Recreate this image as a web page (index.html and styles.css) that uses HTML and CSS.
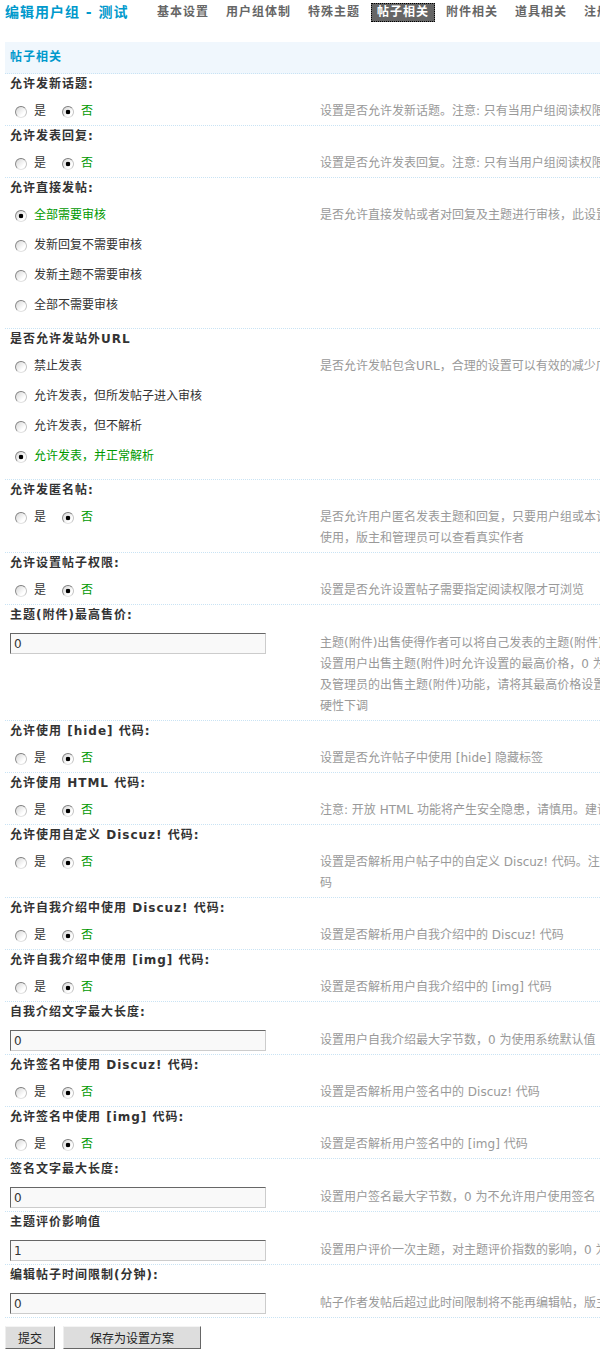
FILE: index.html
```html
<!DOCTYPE html>
<html lang="zh-CN">
<head>
  <meta charset="UTF-8">
  <title>编辑用户组 - 测试</title>
  <link rel="stylesheet" href="styles.css">
</head>
<body>
<div class="page">

  <!-- title + tab strip -->
  <div class="top">
    <h1>编辑用户组 - 测试</h1>
    <ul class="tabs">
      <li>基本设置</li>
      <li>用户组体制</li>
      <li>特殊主题</li>
      <li class="on">帖子相关</li>
      <li>附件相关</li>
      <li>道具相关</li>
      <li>注册相关</li>
    </ul>
  </div>

  <form class="panel" onsubmit="return false">
    <h3 class="sec-head">帖子相关</h3>

    <div class="item">
      <div class="item-title">允许发新话题:</div>
      <div class="item-row">
        <div class="field">
          <label class="opt"><input type="radio" name="allowpost" value="1"><span>是</span></label>
          <label class="opt"><input type="radio" name="allowpost" value="0" checked><span>否</span></label>
        </div>
        <div class="tip">设置是否允许发新话题。注意: 只有当用户组阅读权限高于 0 时，才能发新话题</div>
      </div>
    </div>

    <div class="item">
      <div class="item-title">允许发表回复:</div>
      <div class="item-row">
        <div class="field">
          <label class="opt"><input type="radio" name="allowreply" value="1"><span>是</span></label>
          <label class="opt"><input type="radio" name="allowreply" value="0" checked><span>否</span></label>
        </div>
        <div class="tip">设置是否允许发表回复。注意: 只有当用户组阅读权限高于 0 时，才能发表回复</div>
      </div>
    </div>

    <div class="item">
      <div class="item-title">允许直接发帖:</div>
      <div class="item-row">
        <div class="field list">
          <label class="opt"><input type="radio" name="allowdirectpost" value="0" checked><span>全部需要审核</span></label>
          <label class="opt"><input type="radio" name="allowdirectpost" value="1"><span>发新回复不需要审核</span></label>
          <label class="opt"><input type="radio" name="allowdirectpost" value="2"><span>发新主题不需要审核</span></label>
          <label class="opt"><input type="radio" name="allowdirectpost" value="3"><span>全部不需要审核</span></label>
        </div>
        <div class="tip">是否允许直接发帖或者对回复及主题进行审核，此设置仅对普通用户组有效</div>
      </div>
    </div>

    <div class="item">
      <div class="item-title">是否允许发站外URL</div>
      <div class="item-row">
        <div class="field list">
          <label class="opt"><input type="radio" name="allowposturl" value="0"><span>禁止发表</span></label>
          <label class="opt"><input type="radio" name="allowposturl" value="1"><span>允许发表，但所发帖子进入审核</span></label>
          <label class="opt"><input type="radio" name="allowposturl" value="2"><span>允许发表，但不解析</span></label>
          <label class="opt"><input type="radio" name="allowposturl" value="3" checked><span>允许发表，并正常解析</span></label>
        </div>
        <div class="tip">是否允许发帖包含URL，合理的设置可以有效的减少广告帖的数量</div>
      </div>
    </div>

    <div class="item">
      <div class="item-title">允许发匿名帖:</div>
      <div class="item-row">
        <div class="field">
          <label class="opt"><input type="radio" name="allowanonymous" value="1"><span>是</span></label>
          <label class="opt"><input type="radio" name="allowanonymous" value="0" checked><span>否</span></label>
        </div>
        <div class="tip">是否允许用户匿名发表主题和回复，只要用户组或本论坛允许，用户便可使用匿名发帖功能，匿名帖需登录后才可<br>使用，版主和管理员可以查看真实作者</div>
      </div>
    </div>

    <div class="item">
      <div class="item-title">允许设置帖子权限:</div>
      <div class="item-row">
        <div class="field">
          <label class="opt"><input type="radio" name="allowsetreadperm" value="1"><span>是</span></label>
          <label class="opt"><input type="radio" name="allowsetreadperm" value="0" checked><span>否</span></label>
        </div>
        <div class="tip">设置是否允许设置帖子需要指定阅读权限才可浏览</div>
      </div>
    </div>

    <div class="item">
      <div class="item-title">主题(附件)最高售价:</div>
      <div class="item-row txt">
        <div class="field"><input class="txt-input" type="text" name="maxprice" value="0"></div>
        <div class="tip">主题(附件)出售使得作者可以将自己发表的主题(附件)设置为需要付费才能浏览，此处<br>设置用户出售主题(附件)时允许设置的最高价格，0 为不允许用户出售。如需关闭版主<br>及管理员的出售主题(附件)功能，请将其最高价格设置为 0，已出售的主题价格不会被<br>硬性下调</div>
      </div>
    </div>

    <div class="item">
      <div class="item-title">允许使用 [hide] 代码:</div>
      <div class="item-row">
        <div class="field">
          <label class="opt"><input type="radio" name="allowhidecode" value="1"><span>是</span></label>
          <label class="opt"><input type="radio" name="allowhidecode" value="0" checked><span>否</span></label>
        </div>
        <div class="tip">设置是否允许帖子中使用 [hide] 隐藏标签</div>
      </div>
    </div>

    <div class="item">
      <div class="item-title">允许使用 HTML 代码:</div>
      <div class="item-row">
        <div class="field">
          <label class="opt"><input type="radio" name="allowhtml" value="1"><span>是</span></label>
          <label class="opt"><input type="radio" name="allowhtml" value="0" checked><span>否</span></label>
        </div>
        <div class="tip">注意: 开放 HTML 功能将产生安全隐患，请慎用。建议只在十分必要的情况下使用</div>
      </div>
    </div>

    <div class="item">
      <div class="item-title">允许使用自定义 Discuz! 代码:</div>
      <div class="item-row">
        <div class="field">
          <label class="opt"><input type="radio" name="allowcusbbcode" value="1"><span>是</span></label>
          <label class="opt"><input type="radio" name="allowcusbbcode" value="0" checked><span>否</span></label>
        </div>
        <div class="tip">设置是否解析用户帖子中的自定义 Discuz! 代码。注意: 需先在后台添加并启用相应的代<br>码</div>
      </div>
    </div>

    <div class="item">
      <div class="item-title">允许自我介绍中使用 Discuz! 代码:</div>
      <div class="item-row">
        <div class="field">
          <label class="opt"><input type="radio" name="allowbiobbcode" value="1"><span>是</span></label>
          <label class="opt"><input type="radio" name="allowbiobbcode" value="0" checked><span>否</span></label>
        </div>
        <div class="tip">设置是否解析用户自我介绍中的 Discuz! 代码</div>
      </div>
    </div>

    <div class="item">
      <div class="item-title">允许自我介绍中使用 [img] 代码:</div>
      <div class="item-row">
        <div class="field">
          <label class="opt"><input type="radio" name="allowbioimgcode" value="1"><span>是</span></label>
          <label class="opt"><input type="radio" name="allowbioimgcode" value="0" checked><span>否</span></label>
        </div>
        <div class="tip">设置是否解析用户自我介绍中的 [img] 代码</div>
      </div>
    </div>

    <div class="item">
      <div class="item-title">自我介绍文字最大长度:</div>
      <div class="item-row txt">
        <div class="field"><input class="txt-input" type="text" name="maxbiosize" value="0"></div>
        <div class="tip">设置用户自我介绍最大字节数，0 为使用系统默认值</div>
      </div>
    </div>

    <div class="item">
      <div class="item-title">允许签名中使用 Discuz! 代码:</div>
      <div class="item-row">
        <div class="field">
          <label class="opt"><input type="radio" name="allowsigbbcode" value="1"><span>是</span></label>
          <label class="opt"><input type="radio" name="allowsigbbcode" value="0" checked><span>否</span></label>
        </div>
        <div class="tip">设置是否解析用户签名中的 Discuz! 代码</div>
      </div>
    </div>

    <div class="item">
      <div class="item-title">允许签名中使用 [img] 代码:</div>
      <div class="item-row">
        <div class="field">
          <label class="opt"><input type="radio" name="allowsigimgcode" value="1"><span>是</span></label>
          <label class="opt"><input type="radio" name="allowsigimgcode" value="0" checked><span>否</span></label>
        </div>
        <div class="tip">设置是否解析用户签名中的 [img] 代码</div>
      </div>
    </div>

    <div class="item">
      <div class="item-title">签名文字最大长度:</div>
      <div class="item-row txt">
        <div class="field"><input class="txt-input" type="text" name="maxsigsize" value="0"></div>
        <div class="tip">设置用户签名最大字节数，0 为不允许用户使用签名</div>
      </div>
    </div>

    <div class="item">
      <div class="item-title">主题评价影响值</div>
      <div class="item-row txt">
        <div class="field"><input class="txt-input" type="text" name="raterange" value="1"></div>
        <div class="tip">设置用户评价一次主题，对主题评价指数的影响，0 为不允许评价主题</div>
      </div>
    </div>

    <div class="item">
      <div class="item-title">编辑帖子时间限制(分钟):</div>
      <div class="item-row txt">
        <div class="field"><input class="txt-input" type="text" name="edittimelimit" value="0"></div>
        <div class="tip">帖子作者发帖后超过此时间限制将不能再编辑帖，版主和管理员不受此限制，0 为不限制</div>
      </div>
    </div>

    <div class="btns">
      <button type="submit" class="btn">提交</button>
      <button type="button" class="btn btn-wide">保存为设置方案</button>
    </div>
  </form>

</div>
</body>
</html>
```

FILE: styles.css
```css
body {
  margin: 0;
  font: 12px "DejaVu Sans", "Noto Sans CJK SC", sans-serif;
  color: #333;
  background: #fff;
  overflow-x: hidden;
}

.page {
  width: 1100px;
}

/* header: title and tabs */
.top {
  display: flex;
  align-items: flex-start;
  height: 42px;
  padding: 3px 0 0 5px;
  box-sizing: border-box;
}

.top h1 {
  flex: none;
  width: 146px;
  margin: 0;
  font-size: 14px;
  line-height: 19px;
  color: #09c;
  letter-spacing: 1px;
  white-space: nowrap;
}

.tabs {
  display: flex;
  list-style: none;
  margin: 0;
  padding: 0;
}

.tabs li {
  padding: 0 5px;
  margin-right: 5px;
  line-height: 17px;
  border: 1px dotted transparent;
  font-weight: bold;
  color: #666;
  letter-spacing: 1px;
  white-space: nowrap;
  cursor: pointer;
}

.tabs li.on {
  background: #666;
  color: #fff;
  border-color: #000;
}

/* settings panel */
.panel {
  margin: 0 0 0 5px;
}

.sec-head {
  margin: 0;
  height: 31px;
  line-height: 31px;
  padding-left: 5px;
  background: #f0f7fd;
  color: #09c;
  font-size: 12px;
  letter-spacing: 1px;
  border-bottom: 1px dotted #c9e3f4;
}

.item {
  border-bottom: 1px dotted #c9e3f4;
}

.item-title {
  padding: 0 5px 4px;
  line-height: 21px;
  font-weight: bold;
  letter-spacing: 1px;
  white-space: nowrap;
}

.item-row {
  display: flex;
  padding: 2px 0 3px;
  line-height: 21px;
}

.item-row.txt {
  padding: 3px 0;
}

.field {
  flex: 0 0 315px;
  box-sizing: border-box;
  padding-left: 5px;
  display: flex;
  align-items: flex-start;
}

.field.list {
  display: block;
}

.tip {
  color: #999;
  white-space: nowrap;
}

/* radio options */
.opt {
  display: inline-flex;
  align-items: center;
  height: 21px;
  margin-right: 11px;
  white-space: nowrap;
  cursor: pointer;
}

.field.list .opt {
  display: flex;
  margin: 0 0 9px;
}

.opt input {
  appearance: none;
  -webkit-appearance: none;
  flex: none;
  width: 12px;
  height: 12px;
  margin: 0 7px 0 5px;
  box-sizing: border-box;
  border-radius: 50%;
  border: 1px solid;
  border-color: #7d7d7d #c4c4c4 #e2e2e2 #8c8c8c;
  background: linear-gradient(135deg, #d6d6d6, #fff 70%);
}

.opt input:checked {
  background: radial-gradient(circle, #000 0 2px, transparent 2.6px),
              linear-gradient(135deg, #d6d6d6, #fff 70%);
}

.opt input:checked + span {
  color: #090;
}

.txt-input {
  width: 256px;
  height: 21px;
  box-sizing: border-box;
  margin: 0;
  padding: 0 3px;
  border: 1px solid;
  border-color: #666 #ccc #ccc #666;
  background: #f9f9f9;
  font: 12px "DejaVu Sans", "Noto Sans CJK SC", sans-serif;
  color: #333;
}

/* bottom buttons */
.btns {
  display: flex;
  gap: 8px;
  padding-top: 8px;
}

.btn {
  height: 23px;
  padding: 0 12px;
  background: #ddd;
  border: 1px solid;
  border-color: #f4f4f4 #666 #666 #eee;
  font: 12px "DejaVu Sans", "Noto Sans CJK SC", sans-serif;
  color: #222;
  cursor: pointer;
}

.btn-wide {
  padding: 0 26px;
}
```
